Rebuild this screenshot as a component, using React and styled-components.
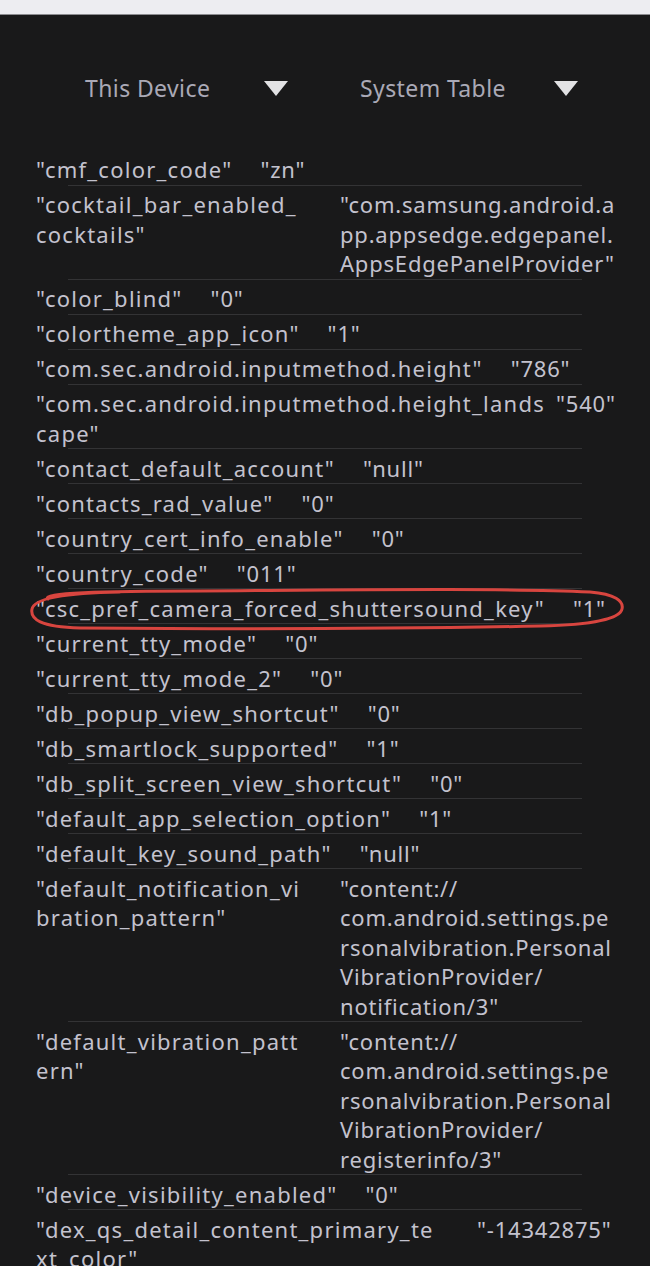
import React from "react";
import styled, { createGlobalStyle } from "styled-components";

const GlobalStyle = createGlobalStyle`
  html, body {
    margin: 0;
    padding: 0;
    background: #19191a;
  }
  body {
    font-family: "Noto Sans", "Liberation Sans", sans-serif;
  }
`;

const Screen = styled.div`
  width: 650px;
  height: 1266px;
  overflow: hidden;
  background: #19191a;
`;

// 상단 밝은 상태바 자투리
const StatusStrip = styled.div`
  height: 14px;
  background: #ededf1;
  border-bottom: 1px solid #8c8c90;
`;

const Header = styled.div`
  display: flex;
  align-items: center;
  height: 60px;
  margin: 43px 0 32.75px;
  padding-left: 85px;
  gap: 72px;
`;

const Selector = styled.div`
  display: flex;
  align-items: center;
  justify-content: space-between;
  width: ${(p) => p.width}px;
  font-size: 23px;
  letter-spacing: 0.4px;
  color: #aaa9b6;
  cursor: pointer;
`;

const Caret = styled.span`
  width: 0;
  height: 0;
  border-left: 12px solid transparent;
  border-right: 12px solid transparent;
  border-top: 15px solid #e2e2e4;
`;

const List = styled.div`
  display: flex;
  flex-direction: column;
`;

const RowWrap = styled.div`
  position: relative;
  padding-left: 36px;
`;

const Row = styled.div`
  display: grid;
  grid-template-columns: ${(p) => (p.keyWidth ? `${p.keyWidth}px auto` : "auto auto")};
  column-gap: ${(p) => (p.keyWidth ? 0 : 28)}px;
  justify-content: start;
  padding-top: 4.5px;
  font-size: 22px;
  line-height: 29.5px;
  color: #c3c2ce;
`;

const Cell = styled.div`
  display: flex;
  flex-direction: column;
  white-space: nowrap;
  letter-spacing: ${(p) => (p.value ? 0.8 : 1.25)}px;
`;

const Divider = styled.div`
  height: 1px;
  width: 514px;
  margin-left: 32px;
  background: #333335;
`;

const Marker = styled.svg`
  position: absolute;
  left: 0;
  top: -4px;
  pointer-events: none;
`;

const ROWS = [
  { k: ['"cmf_color_code"'], v: ['"zn"'] },
  {
    k: ['"cocktail_bar_enabled_', 'cocktails"'],
    v: ['"com.samsung.android.a', "pp.appsedge.edgepanel.", 'AppsEdgePanelProvider"'],
    w: 304,
  },
  { k: ['"color_blind"'], v: ['"0"'] },
  { k: ['"colortheme_app_icon"'], v: ['"1"'] },
  { k: ['"com.sec.android.inputmethod.height"'], v: ['"786"'] },
  { k: ['"com.sec.android.inputmethod.height_lands', 'cape"'], v: ['"540"'], w: 520 },
  { k: ['"contact_default_account"'], v: ['"null"'] },
  { k: ['"contacts_rad_value"'], v: ['"0"'] },
  { k: ['"country_cert_info_enable"'], v: ['"0"'] },
  { k: ['"country_code"'], v: ['"011"'] },
  { k: ['"csc_pref_camera_forced_shuttersound_key"'], v: ['"1"'], marked: true },
  { k: ['"current_tty_mode"'], v: ['"0"'] },
  { k: ['"current_tty_mode_2"'], v: ['"0"'] },
  { k: ['"db_popup_view_shortcut"'], v: ['"0"'] },
  { k: ['"db_smartlock_supported"'], v: ['"1"'] },
  { k: ['"db_split_screen_view_shortcut"'], v: ['"0"'] },
  { k: ['"default_app_selection_option"'], v: ['"1"'] },
  { k: ['"default_key_sound_path"'], v: ['"null"'] },
  {
    k: ['"default_notification_vi', 'bration_pattern"'],
    v: ['"content://', "com.android.settings.pe", "rsonalvibration.Personal", "VibrationProvider/", 'notification/3"'],
    w: 304,
  },
  {
    k: ['"default_vibration_patt', 'ern"'],
    v: ['"content://', "com.android.settings.pe", "rsonalvibration.Personal", "VibrationProvider/", 'registerinfo/3"'],
    w: 304,
  },
  { k: ['"device_visibility_enabled"'], v: ['"0"'] },
  { k: ['"dex_qs_detail_content_primary_te', 'xt_color"'], v: ['"-14342875"'], w: 441 },
];

// 빨간 손그림 동그라미
const HandCircle = () => (
  <Marker width="650" height="48" viewBox="0 0 650 48">
    <path
      d="M 48 14 C 40 8, 100 6, 200 6 C 350 5, 500 3, 590 7 C 615 9, 624 16, 622 24 C 620 34, 590 40, 540 41 C 400 44, 200 44, 80 43 C 40 42, 30 34, 32 24 C 34 14, 60 8, 120 7"
      fill="none"
      stroke="#d8453f"
      strokeWidth="3"
      strokeLinecap="round"
    />
  </Marker>
);

const App = () => {
  return (
    <Screen>
      <GlobalStyle />
      <StatusStrip />
      <Header>
        <Selector width={203}>
          <span>This Device</span>
          <Caret />
        </Selector>
        <Selector width={218}>
          <span>System Table</span>
          <Caret />
        </Selector>
      </Header>

      <List>
        {ROWS.map((row, i) => (
          <RowWrap key={i}>
            <Row keyWidth={row.w}>
              <Cell>
                {row.k.map((line) => (
                  <span key={line}>{line}</span>
                ))}
              </Cell>
              <Cell value>
                {row.v.map((line) => (
                  <span key={line}>{line}</span>
                ))}
              </Cell>
            </Row>
            <Divider />
            {row.marked && <HandCircle />}
          </RowWrap>
        ))}
      </List>
    </Screen>
  );
};

export default App;
